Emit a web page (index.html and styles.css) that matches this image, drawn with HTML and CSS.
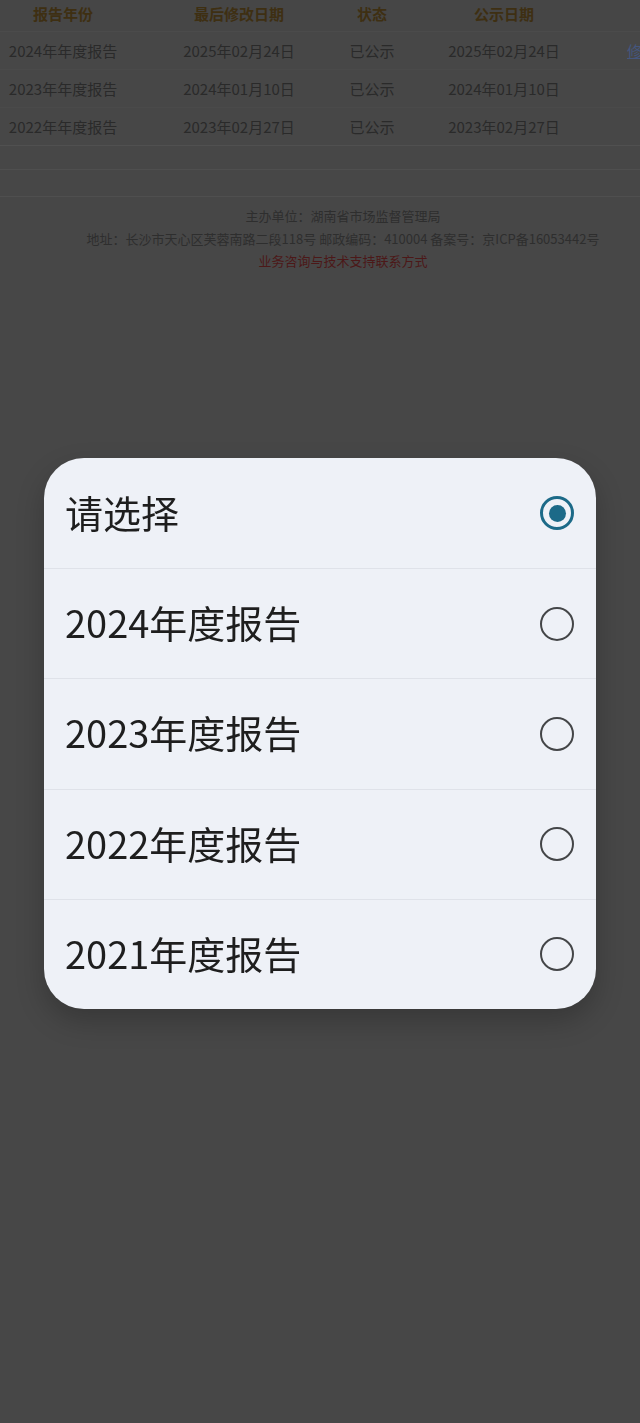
FILE: index.html
```html
<!DOCTYPE html>
<html lang="zh-CN">
<head>
<meta charset="utf-8">
<title>年度报告</title>
<link rel="stylesheet" href="styles.css">
</head>
<body>
<div class="page">
  <div class="table">
    <div class="row head">
      <div class="c c1">报告年份</div>
      <div class="c c2">最后修改日期</div>
      <div class="c c3">状态</div>
      <div class="c c4">公示日期</div>
      <div class="c c5"></div>
    </div>
    <div class="row">
      <div class="c c1">2024年年度报告</div>
      <div class="c c2">2025年02月24日</div>
      <div class="c c3">已公示</div>
      <div class="c c4">2025年02月24日</div>
      <div class="c c5"><span class="link">修改</span></div>
    </div>
    <div class="row">
      <div class="c c1">2023年年度报告</div>
      <div class="c c2">2024年01月10日</div>
      <div class="c c3">已公示</div>
      <div class="c c4">2024年01月10日</div>
      <div class="c c5"></div>
    </div>
    <div class="row">
      <div class="c c1">2022年年度报告</div>
      <div class="c c2">2023年02月27日</div>
      <div class="c c3">已公示</div>
      <div class="c c4">2023年02月27日</div>
      <div class="c c5"></div>
    </div>
  </div>
  <div class="spacer s1"></div>
  <div class="spacer s2"></div>
  <footer class="footer">
    <p>主办单位：湖南省市场监督管理局</p>
    <p>地址：长沙市天心区芙蓉南路二段118号 邮政编码：410004 备案号：京ICP备16053442号</p>
    <p class="red">业务咨询与技术支持联系方式</p>
  </footer>
</div>

<div class="overlay">
  <div class="dialog">
    <div class="opt">
      <span class="label">请选择</span>
      <span class="radio on"></span>
    </div>
    <div class="opt">
      <span class="label">2024年度报告</span>
      <span class="radio"></span>
    </div>
    <div class="opt">
      <span class="label">2023年度报告</span>
      <span class="radio"></span>
    </div>
    <div class="opt">
      <span class="label">2022年度报告</span>
      <span class="radio"></span>
    </div>
    <div class="opt">
      <span class="label">2021年度报告</span>
      <span class="radio"></span>
    </div>
  </div>
</div>
</body>
</html>
```

FILE: styles.css
```css
html, body {
  margin: 0;
  padding: 0;
  background: #474747;
  overflow: hidden;
  font-family: "Noto Sans CJK SC", "Noto Sans", sans-serif;
}

.page {
  margin-top: -4px;
  width: 640px;
  overflow: hidden;
}

.table {
  width: 698px;
}

.row {
  display: grid;
  grid-template-columns: 126px 198px 96px 168px 110px;
  height: 38px;
  align-items: center;
  border-bottom: 1px solid #4a4a4a;
  box-sizing: border-box;
  font-size: 15px;
  color: #2a2a2a;
}

.row.head {
  height: 36px;
  font-weight: bold;
  color: #3e2f12;
  background: #464646;
  border-bottom: 1px solid #4b4b4b;
}

.c {
  text-align: center;
  white-space: nowrap;
}

.c2 {
  padding-left: 28px;
}

.c5 {
  text-align: left;
  padding-left: 39px;
}

.link {
  color: #44567e;
  text-decoration: underline;
}

.spacer {
  box-sizing: border-box;
  border-bottom: 1px solid #4f4f4f;
}

.s1 { height: 24px; }
.s2 { height: 27px; }

.table .row:last-child {
  border-bottom: 1px solid #505050;
}

.footer {
  padding-top: 8px;
  padding-left: 46px;
  text-align: center;
  font-size: 13px;
  color: #2e2e2e;
}

.footer p {
  margin: 0;
  line-height: 22.5px;
  white-space: nowrap;
}

.footer .red {
  color: #4c1818;
}

.overlay {
  position: fixed;
  inset: 0;
  display: flex;
  justify-content: center;
  align-items: flex-start;
  padding-top: 458px;
}

.dialog {
  width: 552px;
  background: #eef1f7;
  border-radius: 40px;
  overflow: hidden;
  box-shadow: 0 12px 28px rgba(0, 0, 0, 0.22);
}

.opt {
  display: flex;
  align-items: center;
  justify-content: space-between;
  height: 110.2px;
  box-sizing: border-box;
  padding: 0 22px 4px 21px;
  border-top: 1px solid #dfe2e9;
}

.opt:first-child {
  border-top: none;
}

.label {
  font-size: 38px;
  color: #1e1e1e;
}

.radio {
  width: 34px;
  height: 34px;
  box-sizing: border-box;
  border: 2.5px solid #444648;
  border-radius: 50%;
  position: relative;
  margin-top: 4px;
}

.radio.on {
  border: 3.5px solid #1c6a88;
}

.radio.on::after {
  content: "";
  position: absolute;
  left: 50%;
  top: 50%;
  width: 17px;
  height: 17px;
  margin: -8.5px 0 0 -8.5px;
  border-radius: 50%;
  background: #1c6a88;
}
```
